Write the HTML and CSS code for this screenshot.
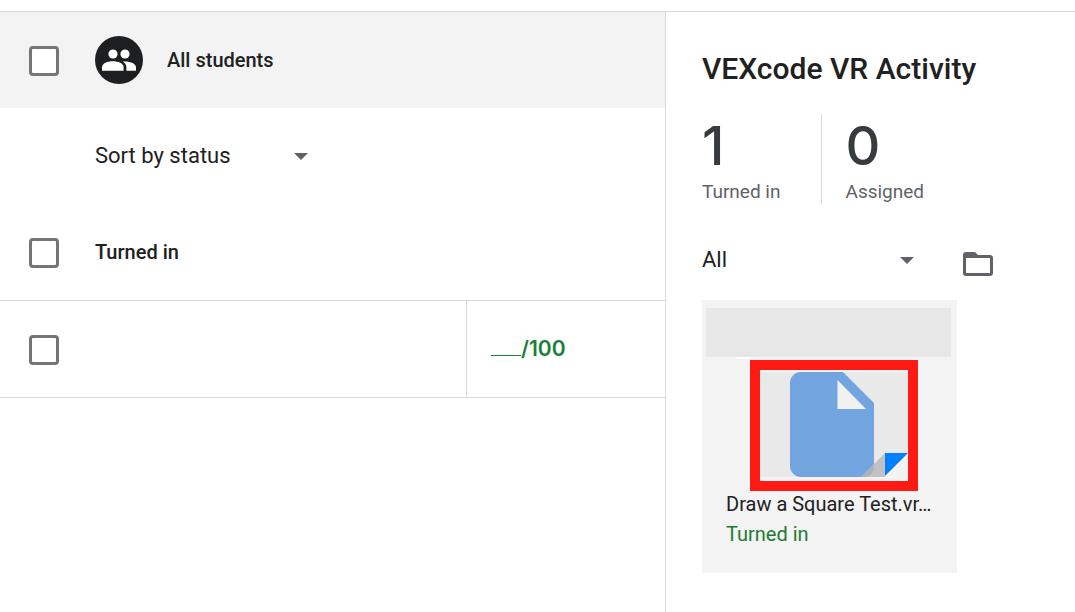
FILE: index.html
```
<!DOCTYPE html>
<html lang="en">

<head>
    <meta charset="UTF-8">
    <meta name="viewport" content="width=device-width, initial-scale=1.0">
    <title>VEXcode VR Activity</title>
    <link rel="stylesheet" href="styles.css">
</head>

<body>
    <header class="topbar"></header>
    <div class="page">
        <section class="students">
            <div class="row all-row">
                <input type="checkbox" class="check" id="check_all">
                <label class="all-label" for="check_all">
                    <svg class="avatar" viewBox="0 0 48 48" aria-hidden="true">
                        <circle cx="24" cy="24" r="24" fill="#1d1f21"/>
                        <g fill="#fff">
                            <circle cx="18" cy="18" r="4.6"/>
                            <circle cx="30" cy="18" r="4.6"/>
                            <path d="M7 34.700v-3.400c0-4 5.600-6 10.800-6s10.800 2 10.800 6v3.400z"/>
                            <path d="M27.600 25.500c7-.6 13.400 1.600 13.400 5.800v3.400H31.400v-3.400c0-2.600-1.600-4.500-3.800-5.800z"/>
                        </g>
                    </svg>
                    <span class="strong">All students</span>
                </label>
            </div>
            <div class="row sort-row">
                <div class="dropdown sort">
                    <select aria-label="Sort students">
                        <option>Sort by status</option>
                    </select>
                    <svg class="arrow" viewBox="0 0 14 7" aria-hidden="true"><path d="M0 0h14L7 7z" fill="#5f6368"/></svg>
                </div>
            </div>
            <div class="row group-row">
                <input type="checkbox" class="check" id="check_turned">
                <label class="strong" for="check_turned">Turned in</label>
            </div>
            <div class="row student-row">
                <div class="student">
                    <input type="checkbox" class="check" aria-label="Select student">
                </div>
                <div class="grade">
                    <input type="text" class="points" id="points" aria-label="Grade">
                    <label for="points">/100</label>
                </div>
            </div>
        </section>

        <aside class="work">
            <h1 class="title">VEXcode VR Activity</h1>
            <div class="stats">
                <div class="stat">
                    <div class="number">1</div>
                    <div class="caption">Turned in</div>
                </div>
                <div class="stat">
                    <div class="number">0</div>
                    <div class="caption">Assigned</div>
                </div>
            </div>
            <div class="filter">
                <div class="dropdown show">
                    <select aria-label="Filter work">
                        <option>All</option>
                    </select>
                    <svg class="arrow" viewBox="0 0 14 7" aria-hidden="true"><path d="M0 0h14L7 7z" fill="#5f6368"/></svg>
                </div>
                <button class="folder" aria-label="Open folder">
                    <svg viewBox="0 0 30 24" aria-hidden="true">
                        <path fill="#5f6368" fill-rule="evenodd" d="M3 0h9l3 3h12a3 3 0 0 1 3 3v15a3 3 0 0 1-3 3H3a3 3 0 0 1-3-3V3a3 3 0 0 1 3-3zM3 6v15h24V6z"/>
                    </svg>
                </button>
            </div>
            <div class="card">
                <div class="name"></div>
                <div class="thumb">
                    <svg viewBox="0 0 148 111" aria-hidden="true">
                        <path fill="#e9e9e9" d="M0 2h148v81l-24 24H0z"/>
                        <path fill="#72a5e0" d="M41 2h42l31 31v64a10 10 0 0 1-10 10H41a11 11 0 0 1-11-11V13A11 11 0 0 1 41 2z"/>
                        <path fill="#f1f1f1" d="M77.500 10v29H106z"/>
                        <path fill="#c2c2c2" d="M101 107l24-24v24z"/>
                        <path fill="#a9b2bd" d="M101 107l13-13v3a10 10 0 0 1-10 10z"/>
                        <path fill="#f3f3f3" d="M125 107V83h23v24z"/>
                        <path fill="#0080ff" d="M125 83h23l-23 23z"/>
                    </svg>
                </div>
                <div class="info">
                    <div class="file">Draw a Square Test.vr…</div>
                    <div class="status">Turned in</div>
                </div>
            </div>
        </aside>
    </div>
</body>

</html>
```
FILE: styles.css
```
* {
    box-sizing: border-box;
}

body {
    margin: 0;
    min-height: 100vh;
    display: flex;
    flex-direction: column;
    font-family: Roboto, sans-serif;
    font-size: 20px;
    line-height: 30px;
    color: #212121;
    background-color: white;
}

.topbar {
    height: 12px;
    border-bottom: 1px solid #dadada;
}

.page {
    display: flex;
    flex: 1;
}

/* student list */
.students {
    flex: 1;
}

.row {
    display: flex;
    align-items: center;
    height: 96px;
    padding-left: 29px;
}

.all-row {
    background-color: #f3f3f3;
}

.all-label {
    display: flex;
    align-items: center;
    gap: 24px;
}

.avatar {
    width: 48px;
    height: 48px;
}

.check {
    appearance: none;
    flex: none;
    width: 30px;
    height: 30px;
    margin: 2px 36px 0 0;
    border: 3px solid #757575;
    border-radius: 4px;
    background-color: white;
}

.strong {
    font-weight: 500;
}

.sort-row {
    padding-left: 95px;
}

.group-row {
    height: 97px;
    border-bottom: 1px solid #dadada;
}

.student-row {
    height: 97px;
    border-bottom: 1px solid #dadada;
}

.student {
    display: flex;
    align-items: center;
    flex: 1;
}

.grade {
    display: flex;
    align-items: center;
    align-self: stretch;
    width: 199px;
    padding-left: 24px;
    border-left: 1px solid #dadada;
    font-family: Inter, sans-serif;
    font-size: 21px;
    font-weight: 600;
    color: #188038;
}

.points {
    width: 30px;
    height: 14px;
    padding: 0;
    border: none;
    border-bottom: 1px solid #188038;
    background: none;
    font: inherit;
    color: inherit;
}

.dropdown {
    position: relative;
}

.dropdown select {
    appearance: none;
    width: 100%;
    height: 48px;
    padding: 0 0 2px;
    border: none;
    background: none;
    font-family: inherit;
    font-size: 22px;
    color: #212121;
}

.arrow {
    position: absolute;
    right: 6px;
    top: 21px;
    width: 14px;
    height: 7px;
    pointer-events: none;
}

.sort {
    width: 219px;
}

.show {
    width: 218px;
}

/* work panel */
.work {
    width: 410px;
    padding: 36px;
    border-left: 1px solid #dadada;
}

.title {
    margin: 0 0 24px;
    font-size: 30px;
    line-height: 42px;
    font-weight: 500;
}

.stats {
    display: flex;
}

.stat {
    height: 90px;
    padding-right: 41px;
}

.stat + .stat {
    padding-left: 23px;
    border-left: 1px solid #dadada;
}

.number {
    font-family: Inter, sans-serif;
    font-size: 54px;
    line-height: 64px;
    font-weight: 500;
    color: #373b3e;
}

.caption {
    font-size: 19px;
    line-height: 28px;
    color: #5f6368;
}

.filter {
    display: flex;
    align-items: center;
    gap: 43px;
    padding: 32px 0 16px;
}

.folder {
    height: 24px;
    margin-top: 8px;
    padding: 0;
    border: none;
    background: none;
}

.folder svg {
    display: block;
    width: 30px;
    height: 24px;
}

.card {
    width: 255px;
    padding: 8px 6px 22px 4px;
    background-color: #f3f3f3;
}

.name {
    position: relative;
    height: 49px;
    background-color: #e7e7e7;
}

/* edge of the round badge under the name */
.name::after {
    content: "";
    position: absolute;
    top: 100%;
    left: 29px;
    width: 18px;
    height: 2px;
    border-radius: 0 0 9px 9px;
    background-color: white;
}

.thumb {
    width: 168px;
    margin: 3px 0 0 44px;
    border: 10px solid #ff1a14;
}

.thumb svg {
    display: block;
    width: 100%;
}

.info {
    padding-left: 20px;
}

.file {
    line-height: 26px;
    white-space: nowrap;
}

.status {
    line-height: 34px;
    color: #1e7b34;
}
```
